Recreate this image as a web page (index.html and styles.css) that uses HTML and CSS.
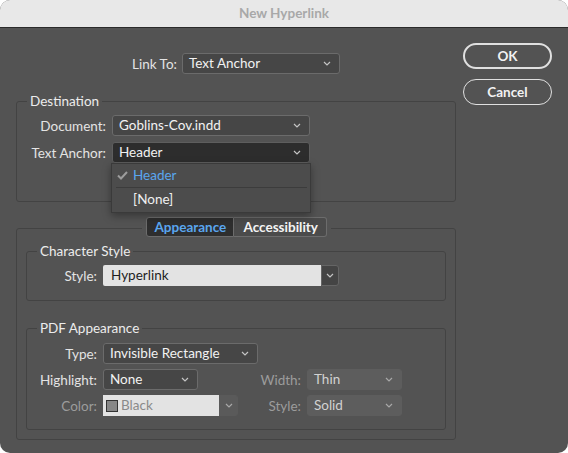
FILE: index.html
```html
<!DOCTYPE html>
<html>
<head>
  <title>New Hyperlink</title>
  <link rel="stylesheet" href="styles.css">
</head>
<body>
<div class="window">
  <div class="titlebar">New Hyperlink</div>
  <div class="content">
    <div class="main">
      <div class="link-row">
        <span class="label">Link To:</span>
        <div class="select link-select">Text Anchor
          <svg class="chev" width="8" height="5" viewBox="0 0 8 5"><polyline points="1,1 4,4 7,1"/></svg>
        </div>
      </div>

      <fieldset class="group dest">
        <legend>Destination</legend>
        <div class="form-grid dest-grid">
          <span class="label">Document:</span>
          <div class="select">Goblins-Cov.indd
            <svg class="chev" width="8" height="5" viewBox="0 0 8 5"><polyline points="1,1 4,4 7,1"/></svg>
          </div>
          <span class="label">Text Anchor:</span>
          <div class="select open">Header
            <svg class="chev" width="8" height="5" viewBox="0 0 8 5"><polyline points="1,1 4,4 7,1"/></svg>
            <div class="menu">
              <div class="menu-item checked">
                <svg class="check" width="11" height="9" viewBox="0 0 11 9"><polyline points="1,4.5 4,7.5 10,1"/></svg>
                Header
              </div>
              <div class="menu-sep"></div>
              <div class="menu-item">[None]</div>
            </div>
          </div>
        </div>
      </fieldset>

      <fieldset class="group panel">
        <legend class="tabs">
          <span class="tab active">Appearance</span><span class="tab">Accessibility</span>
        </legend>

        <fieldset class="group inner char">
          <legend>Character Style</legend>
          <div class="form-grid char-grid">
            <span class="label">Style:</span>
            <div class="combo">
              <span class="combo-text">Hyperlink</span>
              <span class="combo-btn">
                <svg class="chev" width="8" height="5" viewBox="0 0 8 5"><polyline points="1,1 4,4 7,1"/></svg>
              </span>
            </div>
          </div>
        </fieldset>

        <fieldset class="group inner pdf">
          <legend>PDF Appearance</legend>
          <div class="form-grid pdf-grid">
            <span class="label">Type:</span>
            <div class="select type-select">Invisible Rectangle
              <svg class="chev" width="8" height="5" viewBox="0 0 8 5"><polyline points="1,1 4,4 7,1"/></svg>
            </div>

            <span class="label">Highlight:</span>
            <div class="select hl-select">None
              <svg class="chev" width="8" height="5" viewBox="0 0 8 5"><polyline points="1,1 4,4 7,1"/></svg>
            </div>
            <span class="label disabled">Width:</span>
            <div class="select off">Thin
              <svg class="chev" width="8" height="5" viewBox="0 0 8 5"><polyline points="1,1 4,4 7,1"/></svg>
            </div>

            <span class="label disabled">Color:</span>
            <div class="combo color-combo">
              <span class="combo-text"><span class="swatch"></span>Black</span>
              <span class="combo-btn">
                <svg class="chev" width="8" height="5" viewBox="0 0 8 5"><polyline points="1,1 4,4 7,1"/></svg>
              </span>
            </div>
            <span class="label disabled">Style:</span>
            <div class="select off">Solid
              <svg class="chev" width="8" height="5" viewBox="0 0 8 5"><polyline points="1,1 4,4 7,1"/></svg>
            </div>
          </div>
        </fieldset>
      </fieldset>
    </div>

    <div class="buttons">
      <div class="btn default">OK</div>
      <div class="btn">Cancel</div>
    </div>
  </div>
</div>
</body>
</html>
```

FILE: styles.css
```css
* {
    box-sizing: border-box;
}

body {
    margin: 0;
    background-color: #ffffff;
    font-family: Lato, "Open Sans", sans-serif;
    font-size: 13.5px;
    color: #e4e4e4;
}

.window {
    width: 568px;
    height: 453px;
    background-color: #535353;
    border-radius: 10px;
    overflow: hidden;
}

.titlebar {
    height: 28px;
    background-color: #e8e8e8;
    border-bottom: 1px solid #2b2b2b;
    color: #a8a8a8;
    font-weight: bold;
    text-align: center;
    line-height: 27px;
}

.content {
    display: flex;
    gap: 7px;
    padding: 0 16px 14px 16px;
}

.main {
    width: 440px;
    padding-top: 25px;
}

.buttons {
    width: 89px;
    padding-top: 15px;
    display: flex;
    flex-direction: column;
    gap: 10px;
}

.btn {
    height: 26px;
    border: 1px solid #e0e0e0;
    border-radius: 13px;
    color: #f2f2f2;
    font-size: 13.5px;
    font-weight: bold;
    text-align: center;
    line-height: 24px;
}

.btn.default {
    border-width: 2px;
    line-height: 22px;
}

.label {
    text-align: right;
    white-space: nowrap;
    color: #e4e4e4;
}

.label.disabled {
    color: #9c9c9c;
}

/* dropdowns */
.select {
    position: relative;
    height: 21px;
    line-height: 19px;
    padding: 0 20px 0 6px;
    background-color: #464646;
    border: 1px solid #6b6b6b;
    border-radius: 3px;
    color: #f2f2f2;
    white-space: nowrap;
}

.chev {
    position: absolute;
    right: 8px;
    top: 7px;
    fill: none;
    stroke: #c4c4c4;
    stroke-width: 1.2;
}

.select.open {
    background-color: #2d2d2d;
    border-color: #5e5e5e;
}

.select.off {
    background-color: #5d5d5d;
    border-color: #5d5d5d;
    color: #d2d2d2;
}

.select.off .chev {
    stroke: #a8a8a8;
}

.link-row {
    display: flex;
    justify-content: center;
    align-items: center;
    gap: 5px;
}

.link-select {
    width: 158px;
}

/* group boxes */
fieldset.group {
    margin: 19px 0 0 0;
    padding: 0 10px;
    border: 1px solid #434343;
    border-radius: 3px;
    min-width: 0;
}

fieldset.group legend {
    padding: 0 3px;
    line-height: 16px;
    color: #ececec;
}

fieldset.dest {
    padding-top: 6px;
    padding-bottom: 38px;
}

.form-grid {
    display: grid;
    align-items: center;
    column-gap: 6px;
}

.dest-grid {
    grid-template-columns: 79px 198px;
    row-gap: 6px;
}

/* open menu */
.menu {
    position: absolute;
    top: 20px;
    left: -2px;
    width: 200px;
    background-color: #4c4c4c;
    border: 1px solid #3a3a3a;
    box-shadow: 0 3px 8px rgba(0, 0, 0, 0.35);
    padding-bottom: 1px;
    z-index: 10;
}

.menu-item {
    position: relative;
    height: 23px;
    line-height: 22px;
    padding-left: 21px;
    color: #f0f0f0;
}

.menu-item.checked {
    color: #5aa6ef;
}

.check {
    position: absolute;
    left: 5px;
    top: 7px;
    fill: none;
    stroke: #9c9c9c;
    stroke-width: 2;
}

.menu-sep {
    height: 1px;
    margin: 0 3px 0 4px;
    background-color: #3c3c3c;
}

/* tab panel */
fieldset.panel {
    margin-top: 15px;
    padding: 0 9px 9px 9px;
}

fieldset.group legend.tabs {
    margin: 0 auto;
    padding: 0 4px 2px 4px;
    display: flex;
    line-height: 18px;
}

.tab {
    height: 20px;
    padding: 0 0 0 10px;
    width: 93px;
    font-weight: bold;
    color: #f4f4f4;
    background-color: #4b4b4b;
    border: 1px solid #6c6c6c;
    border-left: none;
    border-radius: 0 3px 3px 0;
}

.tab.active {
    width: 88px;
    padding-left: 8px;
    color: #5aa6ef;
    background-color: #2e2e2e;
    border-left: 1px solid #6c6c6c;
    border-radius: 3px 0 0 3px;
}

fieldset.char {
    margin-top: 4px;
    padding-top: 6px;
    padding-bottom: 14px;
}

.char-grid {
    grid-template-columns: 60px 236px;
}

.combo {
    display: flex;
    height: 21px;
}

.combo-text {
    flex: 1;
    background-color: #e3e3e3;
    color: #1e1e1e;
    line-height: 21px;
    padding-left: 8px;
    border-radius: 2px 0 0 2px;
}

.combo-btn {
    position: relative;
    width: 18px;
    background-color: #444444;
    border: 1px solid #656565;
    border-radius: 0 3px 3px 0;
}

.combo-btn .chev {
    right: 4px;
    top: 7px;
}

fieldset.pdf {
    padding-top: 7px;
    padding-bottom: 13px;
}

.pdf-grid {
    grid-template-columns: 60px 135px 57px 95px;
    row-gap: 5px;
}

.type-select {
    grid-column: 2 / -1;
    justify-self: start;
    width: 155px;
}

.hl-select {
    width: 95px;
}

.color-combo .combo-text {
    color: #8a8a8a;
    padding-left: 3px;
    border-radius: 0;
    display: flex;
    align-items: center;
}

.swatch {
    display: inline-block;
    width: 12px;
    height: 12px;
    margin-right: 3px;
    background-color: #878787;
    border: 1px solid #333333;
}

.color-combo .combo-btn {
    width: 19px;
    background-color: #5a5a5a;
    border-color: #5a5a5a;
}

.color-combo .combo-btn .chev {
    stroke: #a8a8a8;
}
```
